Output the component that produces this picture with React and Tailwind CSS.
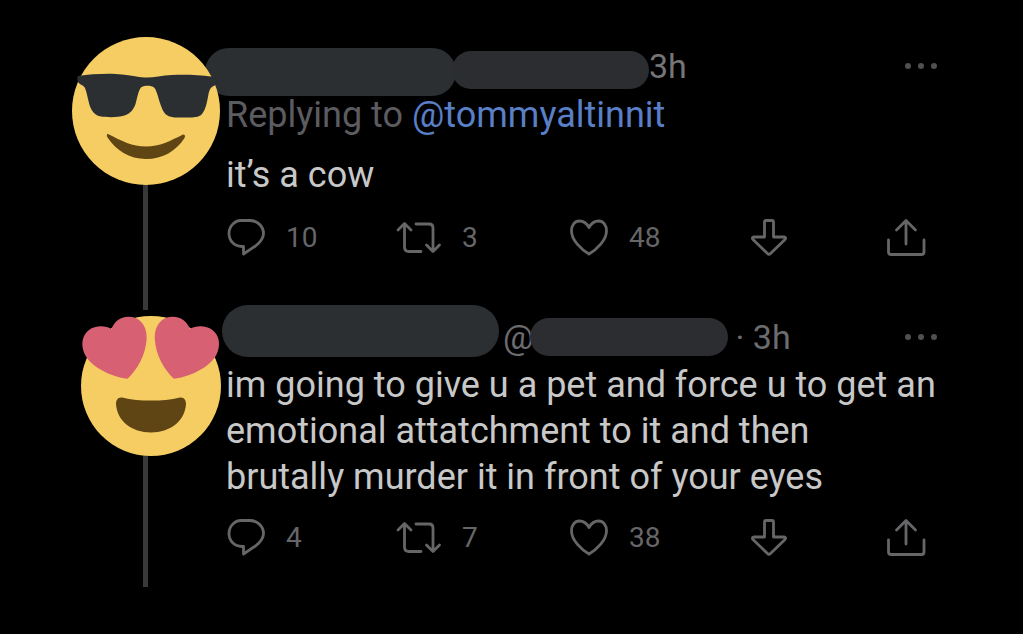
import React from 'react';
import clsx from 'clsx';

function SunglassesFace() {
    return (
        <svg viewBox="0 0 148 148" className="relative z-10 size-[148px] shrink-0" role="img" aria-label="Smiling face with sunglasses">
            <circle cx="74" cy="74" r="74" fill="#f5cd62" />
            <path
                d="M6 39C20 37 38 36 50 37.5C62 39 68 40.5 75 40.5C82 40.5 90 38.5 100 38C114 37.5 128 38 139 39.5C142 39 145 39 145 42C145.500 45 145 48 142.500 48.500C138.500 50 137.500 53 136.500 57C135 65 134 72 130 77C127 80.500 121 80.500 116 80.500C109 80.500 103 81 97.500 79.500C92 77.500 90 72 88 66C85.500 58 84.500 53 82 50.500C80 48 71 48 69 50.500C66.500 53 65.500 60 63.500 67C61.500 73 57.500 77 52.500 78.500C46 80.500 36 80.500 29 79.500C23 78.500 19.500 74 17.500 68C15.500 61 15 56 13 51C11.500 48 8 48 6 45C5 43 5 40 6 39Z"
                fill="#2b2f32"
            />
            <path d="M36 97C50 104 60 109.500 74 109.500C88 109.500 98 104 111 97.500C113 97.500 113.500 99 112.500 101C104 114 91 122 74 122C57 122 44 113 35.500 100.500C34.500 98.500 34.500 97 36 97Z" fill="#5f4513" />
        </svg>
    );
}

function HeartEyesFace() {
    const heart = 'M46.500 62.700C56 54 65 39 65.700 22C65.700 8 58 0.700 47.500 0.700C39 0.700 33 6 30.500 13C24 9 14 9.500 8 14C1.500 19 0 27 2.500 35C7 50 30 61 46.500 62.700Z';

    return (
        <svg viewBox="0 0 140 140" className="relative z-10 size-[140px] shrink-0 self-end" role="img" aria-label="Smiling face with heart eyes">
            <circle cx="70" cy="70" r="70" fill="#f5cd62" />
            <path d={heart} fill="#d86073" />
            <path d={heart} fill="#d86073" transform="matrix(-1 0 0 1 139.400 0)" />
            <path d="M41 81.500C50 84 60 84.500 70 84.500C80 84.500 90 84 99 81.500C103 81 105 84 105 88C104 105 89 116.500 70 116.500C51 116.500 36 105 35 88C35 84 37 81 41 81.500Z" fill="#5f4513" />
        </svg>
    );
}

const icons = {
    reply: {
        box: '0 0 40 40',
        size: 'w-10',
        d: 'M15 2.500H24C31.500 2.500 37.500 8.500 37.500 15.500C37.500 21 34 24.500 29.500 28L17.500 36V28.500H16C8.500 28.500 3 23 3 15.500C3 8.500 8.500 2.500 15 2.500Z',
    },
    retweet: {
        box: '0 0 46 40',
        size: 'w-[46px]',
        d: 'M2 12L8.500 5.500L15 12M8.500 6V29Q8.500 33.500 13 33.500H25M20 6H33Q37 6 37 10V33M30.500 27L37 33.500L43.500 27',
    },
    like: {
        box: '0 0 40 40',
        size: 'w-10',
        d: 'M20 9.500C17.500 5 14 3 10.500 3C5.500 3 2.500 7.500 2.500 13C2.500 22 12 31.500 20 36C28 31.500 37.500 22 37.500 13C37.500 7.500 34.500 3 29.500 3C26 3 22.500 5 20 9.500Z',
    },
    downvote: {
        box: '0 0 40 40',
        size: 'w-10',
        d: 'M14.500 4Q14.500 2.500 16 2.500H22Q23.500 2.500 23.500 4V19H34Q37 19.500 34.500 22L20.500 35.500Q19 37 17.500 35.500L3.500 22Q1 19.500 4 19H14.500Z',
    },
    share: {
        box: '0 0 40 40',
        size: 'w-10',
        d: 'M20 3V26M10.500 12L20 2.500L29.500 12M2.500 22V34Q2.500 36.500 5 36.500H35.500Q38 36.500 38 34V22',
    },
};

function Action({ name, label, count }) {
    const icon = icons[name];

    return (
        <button type="button" aria-label={label} className="flex h-10 items-center gap-5 text-left text-[28px] leading-10">
            <svg viewBox={icon.box} className={clsx('h-10 shrink-0', icon.size)} fill="none" stroke="currentColor" strokeWidth="2.800" strokeLinecap="round" strokeLinejoin="round">
                <path d={icon.d} />
            </svg>
            {count != null ? <span>{count}</span> : null}
        </button>
    );
}

function Actions({ replies, retweets, likes }) {
    return (
        <div className="grid grid-cols-[170fr_173fr_181fr_136fr_53fr] text-[#666668]">
            <Action name="reply" label="Reply" count={replies} />
            <Action name="retweet" label="Retweet" count={retweets} />
            <Action name="like" label="Like" count={likes} />
            <Action name="downvote" label="Downvote" />
            <Action name="share" label="Share" />
        </div>
    );
}

function MoreButton() {
    return (
        <button type="button" aria-label="More" className="ml-auto flex h-9 items-center text-[#505053]">
            <svg viewBox="0 0 36 10" className="h-[10px] w-9" fill="currentColor">
                <circle cx="5" cy="5" r="3" />
                <circle cx="18" cy="5" r="3" />
                <circle cx="31" cy="5" r="3" />
            </svg>
        </button>
    );
}

function ThreadLine() {
    return <div className="mr-0.5 w-[5px] flex-1 bg-[#38383a]" />;
}

export default function App() {
    return (
        <main className="min-h-screen bg-black pt-[37px] pr-[84px] pl-[71px] font-[Roboto,sans-serif] text-[36px] text-[#c8c8c8]">
            <article className="flex gap-[5px]">
                <div className="flex w-[150px] shrink-0 flex-col items-center">
                    <SunglassesFace />
                    <ThreadLine />
                </div>
                <div className="min-w-0 flex-1 pt-[11px] pb-[52px]">
                    <header className="flex h-12 items-start text-[34px] whitespace-nowrap text-[#757577]">
                        <span className="-ml-[21px] h-12 w-[251px] rounded-full bg-[#2b2f32]" />
                        <span className="mt-[3px] -ml-1 h-[38px] w-[197px] rounded-full bg-[#2b2d31]" />
                        <time className="leading-9">3h</time>
                        <MoreButton />
                    </header>
                    <p className="leading-[38px] text-[#5c5c60]">
                        Replying to <a href="#tommyaltinnit" className="text-[#597fc6]">@tommyaltinnit</a>
                    </p>
                    <p className="mt-[18px] mb-5 leading-[46px]">it’s a cow</p>
                    <Actions replies={10} retweets={3} likes={48} />
                </div>
            </article>

            <article className="flex gap-[5px]">
                <div className="flex w-[150px] shrink-0 flex-col items-center pt-[6px]">
                    <HeartEyesFace />
                    <ThreadLine />
                </div>
                <div className="-mt-[5px] min-w-0 flex-1 pb-[29px]">
                    <header className="flex h-[52px] items-center text-[34px] whitespace-nowrap text-[#6c6c6f]">
                        <span className="-ml-1 h-[52px] w-[277px] rounded-full bg-[#2b2f32]" />
                        <span className="ml-1 flex flex-1 items-center pt-3">
                            <span className="leading-9">@</span>
                            <span className="-ml-1 h-[38px] w-[198px] rounded-full bg-[#2b2d31]" />
                            <time className="ml-2 leading-9">· 3h</time>
                            <MoreButton />
                        </span>
                    </header>
                    <p className="mt-[5px] mb-[18px] leading-[46px]">
                        im going to give u a pet and force u to get an
                        <br />
                        emotional attatchment to it and then
                        <br />
                        brutally murder it in front of your eyes
                    </p>
                    <Actions replies={4} retweets={7} likes={38} />
                </div>
            </article>
        </main>
    );
}
